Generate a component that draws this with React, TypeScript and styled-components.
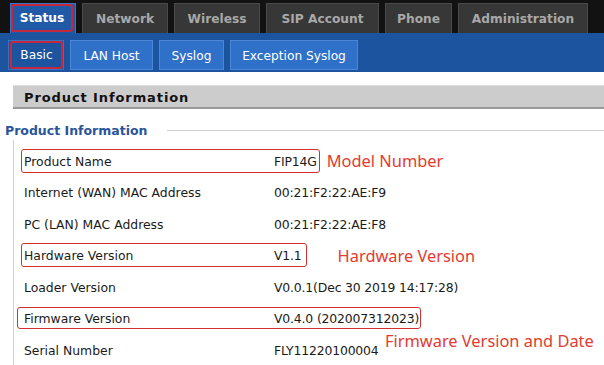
import React from 'react';
import styled, { createGlobalStyle } from 'styled-components';

const Global = createGlobalStyle`
  html, body { margin: 0; padding: 0; background: #ffffff; }
  body {
    width: 604px;
    height: 365px;
    overflow: hidden;
    font-family: "DejaVu Sans", Verdana, sans-serif;
  }
`;

const TopBar = styled.nav`
  display: flex;
  align-items: flex-end;
  gap: 6px;
  height: 33px;
  box-sizing: border-box;
  padding-left: 10px;
  background: #121212;
`;

const TopTab = styled.div<{ $w: number; $active?: boolean }>`
  display: flex;
  align-items: stretch;
  justify-content: center;
  width: ${(p) => p.$w}px;
  height: 30px;
  box-sizing: border-box;
  border: 1px solid ${(p) => (p.$active ? '#3b72c2' : '#4a4a4a')};
  border-bottom: none;
  background: ${(p) => (p.$active ? '#2059a6' : '#373737')};
  color: ${(p) => (p.$active ? '#ffffff' : '#a8a8a8')};
  font-size: 12.2px;
  font-weight: bold;
`;

const TabLabel = styled.span<{ $marked?: boolean }>`
  flex: 1;
  display: flex;
  align-items: center;
  justify-content: center;
  box-sizing: border-box;
  border: 2px solid ${(p) => (p.$marked ? '#c3283f' : 'transparent')};
  border-radius: 3px;
  margin: ${(p) => (p.$marked ? '0 2px 1px 0' : '0')};
`;

const SubBar = styled.div`
  display: flex;
  align-items: flex-end;
  gap: 6px;
  height: 39px;
  box-sizing: border-box;
  padding: 7px 0 2px 8px;
  background: #1d54a0;
`;

const SubTab = styled.div<{ $w: number; $active?: boolean }>`
  display: flex;
  align-items: stretch;
  width: ${(p) => p.$w}px;
  height: 30px;
  box-sizing: border-box;
  padding-top: 1px;
  border: 1px solid ${(p) => (p.$active ? '#3a72c0' : '#4c86d6')};
  background: ${(p) => (p.$active ? '#1d54a0' : '#2f70c9')};
  color: #ffffff;
  font-size: 12.2px;
`;

const SubLabel = styled(TabLabel)`
  margin: ${(p) => (p.$marked ? '-1px 0 0 1px' : '0')};
`;

const SectionHeader = styled.div`
  display: flex;
  align-items: center;
  height: 24px;
  box-sizing: border-box;
  margin: 13px 0 0 13px;
  padding: 1px 0 0 11px;
  background: #cccccc;
  border-top: 1px solid #dedede;
  border-bottom: 2px solid #9a9a9a;
  color: #111111;
  font-size: 13px;
  font-weight: bold;
  letter-spacing: 0.9px;
`;

const LegendRow = styled.div`
  display: flex;
  align-items: center;
  height: 20px;
  margin-top: 11px;
  padding-left: 5px;
`;

const LegendText = styled.span`
  color: #2b559a;
  font-size: 12.5px;
  font-weight: bold;
`;

const LegendLine = styled.span`
  flex: 1;
  height: 1px;
  margin-left: 20px;
  background: #cfcfcf;
`;

const Body = styled.div`
  margin-left: 13px;
  padding-top: 5px;
  border-left: 1px solid #cfcfcf;
`;

const Row = styled.div`
  position: relative;
  display: flex;
  align-items: center;
  height: 31.5px;
  padding-left: 7px;
`;

const Pair = styled.div<{ $marked?: boolean; $inset: number; $h: number; $padR: number }>`
  display: flex;
  align-items: center;
  height: ${(p) => p.$h}px;
  box-sizing: border-box;
  margin-left: ${(p) => -p.$inset}px;
  padding: 1px ${(p) => p.$padR}px 0 ${(p) => 2 + p.$inset}px;
  border: 1px solid ${(p) => (p.$marked ? '#d3302f' : 'transparent')};
  border-radius: 3px;
  font-size: 12.4px;
  color: #1a1a1a;
`;

const Label = styled.span`
  width: 250px;
`;

const Value = styled.span`
  letter-spacing: -0.15px;
`;

const Note = styled.span<{ $gap: number }>`
  margin-left: ${(p) => p.$gap}px;
  font-family: "Noto Sans", "Open Sans", sans-serif;
  font-size: 16.4px;
  color: #e33a2f;
`;

const FloatNote = styled.span`
  position: absolute;
  left: 371px;
  top: 26px;
  font-family: "Noto Sans", "Open Sans", sans-serif;
  font-size: 16.4px;
  color: #e33a2f;
  white-space: nowrap;
`;

const topTabs = [
  { label: 'Status', w: 66, active: true },
  { label: 'Network', w: 86 },
  { label: 'Wireless', w: 86 },
  { label: 'SIP Account', w: 113 },
  { label: 'Phone', w: 67 },
  { label: 'Administration', w: 130 },
];

const subTabs = [
  { label: 'Basic', w: 56, active: true },
  { label: 'LAN Host', w: 83 },
  { label: 'Syslog', w: 65 },
  { label: 'Exception Syslog', w: 128 },
];

type Item = {
  label: string;
  value: string;
  marked?: boolean;
  inset?: number;
  h?: number;
  padR?: number;
  note?: string;
  noteGap?: number;
  floatNote?: string;
};

const items: Item[] = [
  { label: 'Product Name', value: 'FIP14G', marked: true, padR: 2, note: 'Model Number', noteGap: 7 },
  { label: 'Internet (WAN) MAC Address', value: '00:21:F2:22:AE:F9' },
  { label: 'PC (LAN) MAC Address', value: '00:21:F2:22:AE:F8' },
  { label: 'Hardware Version', value: 'V1.1', marked: true, padR: 4, note: 'Hardware Version', noteGap: 31 },
  { label: 'Loader Version', value: 'V0.0.1(Dec 30 2019 14:17:28)' },
  { label: 'Firmware Version', value: 'V0.4.0 (202007312023)', marked: true, inset: 4, h: 22, padR: 1, floatNote: 'Firmware Version and Date' },
  { label: 'Serial Number', value: 'FLY11220100004' },
];

export default function App() {
  return (
    <>
      <Global />
      <TopBar>
        {topTabs.map((t) => (
          <TopTab key={t.label} $w={t.w} $active={t.active}>
            <TabLabel $marked={t.active}>{t.label}</TabLabel>
          </TopTab>
        ))}
      </TopBar>
      <SubBar>
        {subTabs.map((t) => (
          <SubTab key={t.label} $w={t.w} $active={t.active}>
            <SubLabel $marked={t.active}>{t.label}</SubLabel>
          </SubTab>
        ))}
      </SubBar>
      <SectionHeader>Product Information</SectionHeader>
      <LegendRow>
        <LegendText>Product Information</LegendText>
        <LegendLine />
      </LegendRow>
      <Body>
        {items.map((it) => (
          <Row key={it.label}>
            <Pair $marked={it.marked} $inset={it.inset ?? 0} $h={it.h ?? 24} $padR={it.padR ?? 2}>
              <Label>{it.label}</Label>
              <Value>{it.value}</Value>
            </Pair>
            {it.note && <Note $gap={it.noteGap ?? 8}>{it.note}</Note>}
            {it.floatNote && <FloatNote>{it.floatNote}</FloatNote>}
          </Row>
        ))}
      </Body>
    </>
  );
}
